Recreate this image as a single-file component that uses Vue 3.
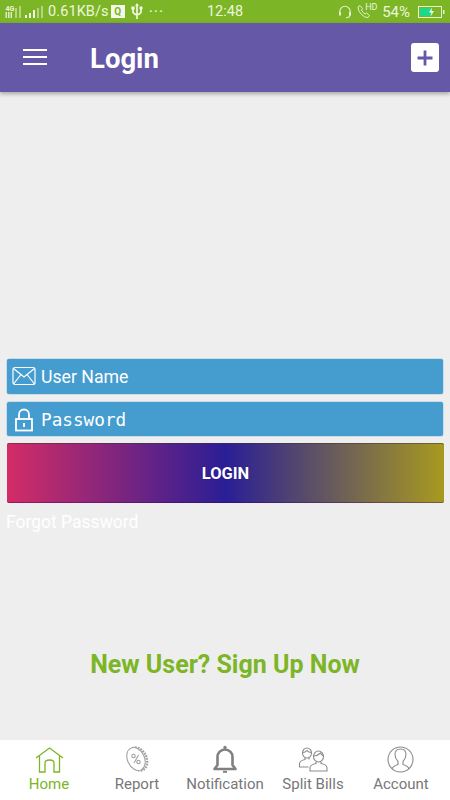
<script setup>
const tabs = ['Home', 'Report', 'Notification', 'Split Bills', 'Account']
</script>

<template>
  <div class="screen">
    <div class="status">
      <div class="status-left">
        <svg class="net" width="39" height="16" viewBox="0 0 39 16">
          <text x="0.500" y="7" class="tiny">4G</text>
          <g fill="#dcebc0">
            <rect x="0.500" y="8" width="1.500" height="6"/><rect x="3" y="8" width="1.500" height="6"/><rect x="5.500" y="8" width="1.500" height="6"/>
          </g>
          <g fill="#c9de9f" opacity=".75"><rect x="10" y="4" width="2" height="10"/><rect x="14" y="2" width="2" height="12"/></g>
          <g fill="#f1f7e4">
            <rect x="20" y="11" width="2" height="3"/><rect x="24" y="9" width="2" height="5"/><rect x="28" y="6" width="2" height="8"/>
          </g>
          <g fill="#c9de9f" opacity=".75"><rect x="32" y="4" width="2" height="10"/><rect x="36" y="2" width="2" height="12"/></g>
        </svg>
        <span class="speed">0.61KB/s</span>
        <span class="qbox">Q</span>
        <svg class="usb" width="12" height="17" viewBox="0 0 12 17">
          <path d="M6 3v13M2 6v3q0 1.500 4 3q4-1.500 4-3V6" fill="none" stroke="#f1f7e4" stroke-width="1.700"/>
          <path d="M6 0l2 3H4z" fill="#f1f7e4"/>
          <rect x="0.300" y="3.500" width="3.400" height="3" fill="#f1f7e4"/><circle cx="10" cy="5" r="1.700" fill="#f1f7e4"/>
        </svg>
        <span class="dots">···</span>
      </div>
      <span class="clock">12:48</span>
      <div class="status-right">
        <svg class="headset" width="14" height="14" viewBox="0 0 14 14" fill="none" stroke="#e6f1d0" stroke-width="1.100">
          <path d="M1.800 9.500V6.500a5.200 5.200 0 0 1 10.400 0v3"/><path d="M12 9.500q0 3-4 3.300"/>
          <rect x="1" y="7" width="2" height="3.500" fill="#e6f1d0" stroke="none"/><rect x="11" y="7" width="2" height="3.500" fill="#e6f1d0" stroke="none"/>
        </svg>
        <span class="callwrap">
          <svg width="19" height="15" viewBox="0 0 19 15" fill="none" stroke="#e6f1d0" stroke-width="1">
            <path d="M1 3l2-1.500 2.500 3-1 1.500q1 2.500 3.500 4l1.500-1 3 2.500-1.500 2q-3 .5-6.500-3T1 3z"/>
          </svg>
          <span class="hd">HD</span>
        </span>
        <span class="pct">54%</span>
        <svg width="27" height="14" viewBox="0 0 27 14">
          <rect x="0.500" y="1.500" width="23" height="11" fill="none" stroke="#e6f1d0"/>
          <rect x="2" y="3" width="11" height="8" fill="#1fd98a"/>
          <rect x="25" y="5" width="1.500" height="4" fill="#e6f1d0"/>
          <path d="M14 2.500l-3 5h2.500l-1 4 3.500-5.500h-2.500z" fill="#f4faea"/>
        </svg>
      </div>
    </div>
    <header class="bar">
      <div class="burger"><i></i><i></i><i></i></div>
      <h1>Login</h1>
      <div class="plus">
        <svg width="16" height="16" viewBox="0 0 16 16"><path d="M8 0.500v15M0.500 8h15" stroke="#6558a6" stroke-width="2.800"/></svg>
      </div>
    </header>
    <main class="content">
      <div class="form">
        <div class="field">
          <svg width="24" height="20" viewBox="0 0 24 20" fill="none" stroke="#fff" stroke-width="1.200">
            <rect x="1" y="1.500" width="22" height="17" rx="2"/>
            <path d="M1.500 2.500L12 11L22.500 2.500M1.500 18L9 8.500M22.500 18L15 8.500"/>
          </svg>
          <span class="label">User Name</span>
        </div>
        <div class="field">
          <svg class="lock" width="20" height="24" viewBox="0 0 20 24" fill="none" stroke="#fff" stroke-width="1.800">
            <path d="M5 11V6.500a5 5 0 0 1 10 0V11"/>
            <rect x="2" y="11" width="16" height="11.500"/>
            <rect x="9" y="15" width="2" height="4" fill="#fff" stroke="none"/>
          </svg>
          <span class="label mono">Password</span>
        </div>
        <button class="login">LOGIN</button>
        <div class="forgot">Forgot Password</div>
      </div>
      <div class="signup">New User? Sign Up Now</div>
    </main>
    <nav class="tabs">
      <div v-for="(t, i) in tabs" :key="t" class="tab" :class="{ active: i === 0 }">
        <svg width="30" height="30" viewBox="0 0 30 30" fill="none">
          <g v-if="i === 0" stroke="#7cb526" stroke-width="1.300">
            <path d="M2 13L15.500 3L29 13"/>
            <path d="M5.500 11v16h5.500v-9q0-3 4.500-3t4.500 3v9h5.500V11"/>
          </g>
          <g v-else-if="i === 1" stroke="#a2a2a2">
            <ellipse cx="16" cy="14" rx="8.500" ry="12" transform="rotate(-25 16 14)" stroke-width="2.400" stroke-dasharray="1.800 1"/>
            <ellipse cx="14" cy="14" rx="8.500" ry="12" transform="rotate(-25 14 14)" stroke-width="1.100" fill="#fff"/>
            <path d="M16.500 10l-4.500 8" stroke-width="1.100"/>
            <circle cx="11.500" cy="11" r="1.700" stroke-width="1.100"/><circle cx="16.500" cy="17" r="1.700" stroke-width="1.100"/>
          </g>
          <g v-else-if="i === 2" stroke="#808080" stroke-width="2.600">
            <path d="M4.500 24l3-4V12a7.500 7.500 0 0 1 15 0v8l3 4z" stroke-linejoin="round"/>
            <circle cx="15" cy="2.500" r="1.700" fill="#808080" stroke="none"/>
            <path d="M13 26.800h4" stroke-width="2"/>
          </g>
          <g v-else-if="i === 3" stroke="#8c8c8c" stroke-width="1.100">
            <ellipse cx="9" cy="8" rx="4.500" ry="5"/>
            <path d="M4.500 7.500q3 0 4.500-2q1.500 2 4.500 2"/>
            <path d="M7 13v1.500q-5 1-5.500 4v3.500h9"/>
            <path d="M11 13v1.500"/>
            <ellipse cx="20.500" cy="11.500" rx="5" ry="5.500"/>
            <path d="M15.500 11q4 0 7-3q1 2 3 3"/>
            <path d="M18 17v1.500q-5.500 1-6 4v3.500h17v-3.500q-.5-3-6-4V17"/>
          </g>
          <g v-else stroke="#8c8c8c" stroke-width="1.100">
            <circle cx="14.500" cy="14.500" r="12.500"/>
            <path d="M6 24q1-3 6-4.500v-3q-3-3-3-7q0-5.500 5.500-5.500t5.500 5.500q0 4-3 7v3q5 1.500 6 4.500"/>
          </g>
        </svg>
        <span>{{ t }}</span>
      </div>
    </nav>
  </div>
</template>

<style>
html, body { margin: 0; }
</style>

<style scoped>
.screen {
  width: 450px;
  height: 800px;
  display: flex;
  flex-direction: column;
  background: #eeeeee;
  font-family: Roboto, sans-serif;
  overflow: hidden;
}
.status {
  height: 23px;
  flex: none;
  background: #7cb526;
  color: #eef5dd;
  display: grid;
  grid-template-columns: 1fr auto 1fr;
  align-items: center;
  font-size: 14.500px;
}
.status-left { display: flex; align-items: center; padding-left: 5px; }
.tiny { font-family: Roboto, sans-serif; font-size: 7px; font-weight: 700; fill: #eef5dd; }
.speed { margin-left: 4px; letter-spacing: .1px; }
.qbox {
  margin-left: 2px;
  width: 14px;
  height: 13px;
  background: #f4f8ea;
  color: #7cb526;
  font-size: 10px;
  font-weight: 700;
  text-align: center;
  line-height: 13px;
}
.usb { margin-left: 6px; }
.dots { margin-left: 6px; font-size: 16px; letter-spacing: 1px; }
.status-right { display: flex; align-items: center; justify-content: flex-end; padding-right: 5px; }
.callwrap { display: flex; position: relative; width: 19px; margin-left: 5px; }
.hd { position: absolute; left: 8px; top: -2px; font-size: 9px; line-height: 10px; }
.pct { margin: 0 8px 0 6px; font-size: 15px; }
.bar {
  height: 69px;
  flex: none;
  background: #6558a6;
  box-shadow: 0 2px 4px rgba(0,0,0,.3);
  display: flex;
  align-items: center;
  color: #fff;
  z-index: 1;
  padding: 0 11px 0 23px;
}
.burger { width: 24px; display: flex; flex-direction: column; gap: 4.500px; margin-top: -1px; }
.burger i { display: block; height: 2.500px; background: #fff; }
h1 { margin: 1px 0 0 43px; font-size: 27.500px; font-weight: 700; flex: 1; }
.plus {
  width: 28px;
  height: 29px;
  background: #fff;
  border-radius: 3px;
  display: flex;
  align-items: center;
  justify-content: center;
}
.content { flex: 1; display: flex; flex-direction: column; padding: 267px 7px 0; min-height: 0; }
.form { display: flex; flex-direction: column; gap: 8px; }
.field {
  height: 34.500px;
  border-radius: 2px;
  background: #459ccf;
  box-shadow: 0 0 0 .5px #a5cde6;
  display: flex;
  align-items: center;
  color: #fff;
  font-size: 17.700px;
  padding: 2px 0 0 5px;
  box-sizing: border-box;
}
.field svg { flex: none; margin: -2px 5px 0 0; }
.field .lock { margin: 0 7px 0 2px; }
.mono { font-family: "DejaVu Sans Mono", monospace; font-size: 17.700px; }
.login {
  height: 60px;
  margin-top: -1px;
  width: 437px;
  border: 0;
  border-radius: 2px;
  background: linear-gradient(90deg, #d42c66 0%, #2a1e96 50%, #a89a1f 100%);
  box-shadow: inset 0 1px 0 rgba(60,50,50,.5), inset 0 -1px 0 rgba(60,0,100,.4);
  color: #fff;
  font-family: Roboto, sans-serif;
  font-size: 16.500px;
  font-weight: 700;
  text-shadow: 0 0 1px #10108a;
}
.forgot { color: #fff; font-size: 17.500px; margin: 1px 0 0 -1px; }
.signup {
  margin-top: 118px;
  text-align: center;
  color: #7cb526;
  font-size: 25px;
  font-weight: 700;
}
.tabs {
  height: 60px;
  flex: none;
  background: #fff;
  padding: 5px 5px 0;
  box-sizing: border-box;
  display: grid;
  grid-template-columns: repeat(5, 88px);
}
.tab {
  display: flex;
  flex-direction: column;
  align-items: center;
  color: #777;
  font-size: 15px;
  line-height: 18px;
}
.tab.active { color: #7cb526; }
</style>
